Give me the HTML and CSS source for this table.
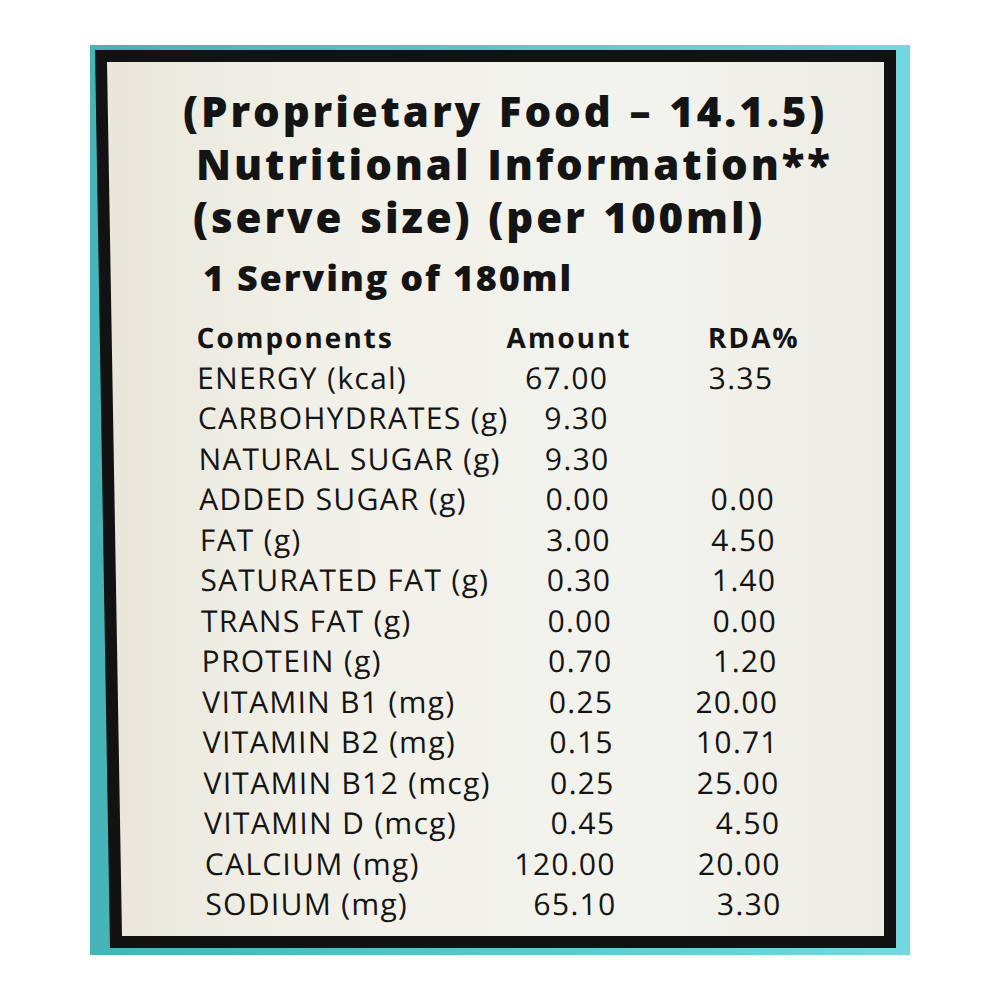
FILE: index.html
```html
<!DOCTYPE html>
<html>
<head>
<meta charset="utf-8">
<link rel="stylesheet" href="styles.css">
</head>
<body>
<div class="frame">
  <div class="outline">
    <div class="label">
      <div class="title">
        <div class="t1">(Proprietary Food – 14.1.5)</div>
        <div class="t2">Nutritional Information**</div>
        <div class="t3">(serve size) (per 100ml)</div>
      </div>
      <div class="serving">1 Serving of 180ml</div>
      <div class="table">
        <div class="row head"><span class="name">Components</span><span class="amt">Amount</span><span class="rda">RDA%</span></div>
        <div class="row"><span class="name">ENERGY (kcal)</span><span class="amt">67.00</span><span class="rda">3.35</span></div>
        <div class="row"><span class="name">CARBOHYDRATES (g)</span><span class="amt">9.30</span><span class="rda"></span></div>
        <div class="row"><span class="name">NATURAL SUGAR (g)</span><span class="amt">9.30</span><span class="rda"></span></div>
        <div class="row"><span class="name">ADDED SUGAR (g)</span><span class="amt">0.00</span><span class="rda">0.00</span></div>
        <div class="row"><span class="name">FAT (g)</span><span class="amt">3.00</span><span class="rda">4.50</span></div>
        <div class="row"><span class="name">SATURATED FAT (g)</span><span class="amt">0.30</span><span class="rda">1.40</span></div>
        <div class="row"><span class="name">TRANS FAT (g)</span><span class="amt">0.00</span><span class="rda">0.00</span></div>
        <div class="row"><span class="name">PROTEIN (g)</span><span class="amt">0.70</span><span class="rda">1.20</span></div>
        <div class="row"><span class="name">VITAMIN B1 (mg)</span><span class="amt">0.25</span><span class="rda">20.00</span></div>
        <div class="row"><span class="name">VITAMIN B2 (mg)</span><span class="amt">0.15</span><span class="rda">10.71</span></div>
        <div class="row"><span class="name">VITAMIN B12 (mcg)</span><span class="amt">0.25</span><span class="rda">25.00</span></div>
        <div class="row"><span class="name">VITAMIN D (mcg)</span><span class="amt">0.45</span><span class="rda">4.50</span></div>
        <div class="row"><span class="name">CALCIUM (mg)</span><span class="amt">120.00</span><span class="rda">20.00</span></div>
        <div class="row"><span class="name">SODIUM (mg)</span><span class="amt">65.10</span><span class="rda">3.30</span></div>
      </div>
    </div>
  </div>
</div>
</body>
</html>
```
FILE: styles.css
```css
html, body {
  margin: 0;
  padding: 0;
  background: #ffffff;
}
body {
  width: 1000px;
  height: 1000px;
  font-family: "Open Sans", "DejaVu Sans", sans-serif;
  color: #141414;
}
.frame {
  box-sizing: border-box;
  margin: 45px 0 0 90px;
  width: 820px;
  height: 910px;
  padding: 5px 14px 7px 5px;
  background: linear-gradient(90deg, #46b3b6 0%, #5cc6cb 50%, #74d8e0 100%);
}
.outline {
  box-sizing: border-box;
  height: 100%;
  padding: 12px;
  background: #121212;
  clip-path: polygon(0 0, 100% 0, 100% 100%, 15px 100%);
}
.label {
  box-sizing: border-box;
  height: 100%;
  background: linear-gradient(90deg, #e9e7da 0%, #f1f0e8 25%, #f3f3ee 70%, #edece3 100%);
  clip-path: polygon(0 0, 100% 0, 100% 100%, 15px 100%);
  padding: 22px 0 0 76px;
}
.title {
  font-weight: 800;
  font-size: 42px;
  line-height: 53px;
  letter-spacing: 2.9px;
  word-spacing: 2px;
}
.t2 { padding-left: 13px; }
.t3 { padding-left: 10px; }
.serving {
  margin-top: 8px;
  font-weight: 800;
  font-size: 36px;
  line-height: 54px;
  letter-spacing: 1.8px;
  padding-left: 20px;
}
.table {
  margin-top: 12px;
  padding-left: 18px;
  font-size: 30px;
  font-weight: 500;
  transform: skewX(0.9deg);
}
.row {
  display: grid;
  grid-template-columns: 300px 111px 165px;
  height: 40.5px;
  line-height: 40.5px;
  letter-spacing: 1.3px;
  white-space: nowrap;
}
.amt, .rda { text-align: right; }
.head {
  font-weight: 700;
  font-size: 28px;
  letter-spacing: 2px;
}
.head .amt { margin-right: -24px; }
.head .rda { margin-right: -27px; }
```
